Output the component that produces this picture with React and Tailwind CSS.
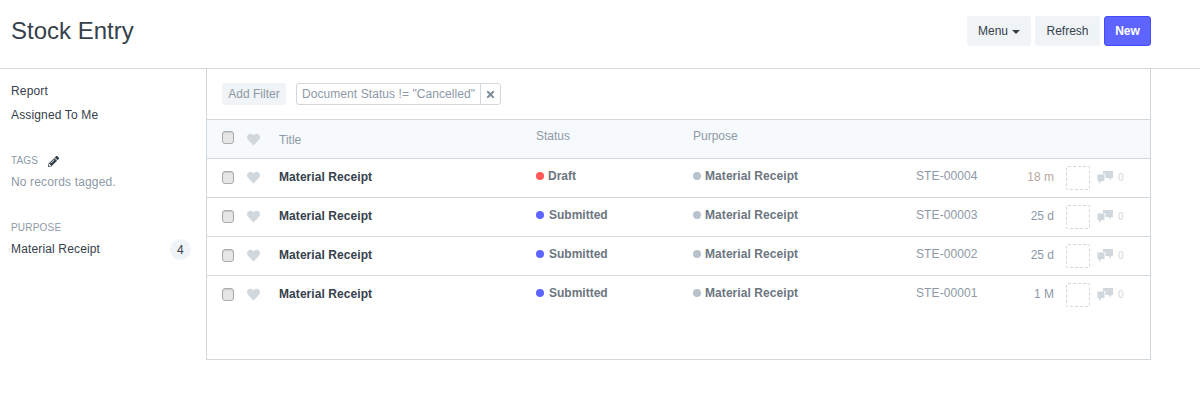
import React from 'react';
import { FaHeart, FaPencilAlt, FaTimes } from 'react-icons/fa';

const rows = [
  { status: 'Draft', dot: 'bg-[#ff5858]', id: 'STE-00004', age: '18 m', ageColor: 'text-[#b8a79e]' },
  { status: 'Submitted', dot: 'bg-[#5e64ff]', id: 'STE-00003', age: '25 d', ageColor: 'text-[#8d99a6]' },
  { status: 'Submitted', dot: 'bg-[#5e64ff]', id: 'STE-00002', age: '25 d', ageColor: 'text-[#8d99a6]' },
  { status: 'Submitted', dot: 'bg-[#5e64ff]', id: 'STE-00001', age: '1 M', ageColor: 'text-[#8d99a6]' },
];

const Checkbox = () => (
  <span className="block w-[12px] h-[13px] rounded-[3px] border border-[#ababab] bg-[#e6e6e6] shadow-[inset_0_1px_1px_rgba(0,0,0,0.12)]" />
);

const CommentIcon = () => (
  <svg width="16" height="13" viewBox="0 0 16 13" fill="#d1d8dd">
    <path d="M6 0h10v7h-2v2.5L11.5 7H8.5V3H6z" />
    <path d="M0.5 3.5H7.5V10H4.5L2 13V10H0.5z" />
  </svg>
);

const Row = ({ status, dot, id, age, ageColor, last }) => (
  <div className={`flex items-center h-[39px] text-[12px] border-b ${last ? 'border-transparent' : 'border-[#d1d8dd]'}`}>
    <div className="w-[15px] ml-[15px] -mt-[2px]"><Checkbox /></div>
    <FaHeart className="ml-[10px] -mt-[2px] text-[#d1d8dd] w-[13px] h-[13px]" />
    <div className="ml-[19px] w-[257px] -mt-[2px] font-bold text-[#36414c] tracking-[0.07px]">Material Receipt</div>
    <div className="w-[157px] flex items-center font-bold text-[#6c7680] -mt-[4px]">
      <span className={`w-[8px] h-[8px] rounded-full ${status === 'Draft' ? 'mr-[4px]' : 'mr-[5px]'} ${dot}`} />
      {status}
    </div>
    <div className="w-[223px] flex items-center font-bold text-[#6c7680] -mt-[4px] tracking-[0.07px]">
      <span className="w-[8px] h-[8px] rounded-full mr-[4px] bg-[#b8c2cc]" />
      Material Receipt
    </div>
    <div className="w-[90px] text-[#8d99a6] -mt-[4px] tracking-[0.1px]">{id}</div>
    <div className={`w-[48px] text-right -mt-[2px] ${ageColor}`}>{age}</div>
    <div className="ml-[12px] w-[24px] h-[24px] rounded-[2px] border border-dashed border-[#d1d8dd]" />
    <div className="ml-[7px] -mt-[2px] flex items-center gap-[5px] text-[10px] text-[#d1d8dd]">
      <CommentIcon />
      <span className="mt-[1px]">0</span>
    </div>
  </div>
);

const App = () => (
  <div className="h-[403px] bg-white font-['Liberation_Sans',Arial,sans-serif] overflow-hidden">
    <header className="h-[69px] border-b border-[#d1d8dd] flex items-center justify-between pl-[11px] pr-[49px]">
      <h1 className="text-[24px] text-[#36414c] -mt-[6px]">Stock Entry</h1>
      <div className="flex gap-[4px] -mt-[6px] text-[12px]">
        <button className="h-[30px] w-[64px] rounded-[3px] bg-[#f0f4f7] text-[#36414c] flex items-center justify-center">
          Menu
          <span className="ml-[4px] mt-[2px] border-x-[4px] border-x-transparent border-t-[4px] border-t-[#36414c]" />
        </button>
        <button className="h-[30px] w-[65px] rounded-[3px] bg-[#f0f4f7] text-[#36414c]">Refresh</button>
        <button className="h-[30px] w-[47px] rounded-[3px] bg-[#5e64ff] border border-[#444bff] text-white font-bold">New</button>
      </div>
    </header>

    <div className="flex">
      <aside className="w-[206px] pl-[11px] pr-[15px] pt-[15px] text-[12px] tracking-[0.15px]">
        <div className="text-[#36414c] leading-[15px]">Report</div>
        <div className="text-[#36414c] leading-[15px] mt-[9px]">Assigned To Me</div>
        <div className="mt-[31px] flex items-center text-[10px] leading-[14px] text-[#8d99a6]">
          TAGS
          <FaPencilAlt className="ml-[10px] w-[11px] h-[11px] text-[#36414c]" />
        </div>
        <div className="mt-[7px] leading-[14px] text-[#8d99a6]">No records tagged.</div>
        <div className="mt-[32px] text-[10px] leading-[14px] text-[#8d99a6] tracking-[0.2px]">PURPOSE</div>
        <div className="mt-[4px] flex items-center justify-between">
          <span className="text-[#36414c] -mt-[2px]">Material Receipt</span>
          <span className="w-[21px] h-[21px] rounded-full bg-[#f0f4f7] text-[#36414c] flex items-center justify-center">4</span>
        </div>
      </aside>

      <main className="w-[945px] h-[291px] border-x border-b border-[#d1d8dd]">
        <div className="h-[51px] border-b border-[#d1d8dd] flex items-center pl-[15px] text-[12px]">
          <button className="h-[22px] w-[64px] rounded-[3px] bg-[#f0f4f7] text-[#8d99a6]">Add Filter</button>
          <div className="ml-[10px] h-[22px] flex items-stretch rounded-[3px] border border-[#d1d8dd]">
            <span className="px-[5px] leading-[20px] text-[#8d99a6] tracking-[0.07px]">Document Status != "Cancelled"</span>
            <span className="w-[20px] border-l border-[#d1d8dd] flex items-center justify-center">
              <FaTimes className="w-[11px] h-[11px] text-[#7f8c99]" />
            </span>
          </div>
        </div>

        <div className="h-[39px] border-b border-[#d1d8dd] bg-[#f7fafc] flex items-center text-[12px] text-[#8d99a6]">
          <div className="w-[15px] ml-[15px] -mt-[4px]"><Checkbox /></div>
          <FaHeart className="ml-[10px] text-[#d1d8dd] w-[13px] h-[13px]" />
          <div className="ml-[19px] w-[257px] mt-[2px]">Title</div>
          <div className="w-[157px] -mt-[6px]">Status</div>
          <div className="-mt-[6px]">Purpose</div>
        </div>

        {rows.map((r, i) => <Row key={r.id} {...r} last={i === rows.length - 1} />)}
      </main>
    </div>
  </div>
);

export default App;
